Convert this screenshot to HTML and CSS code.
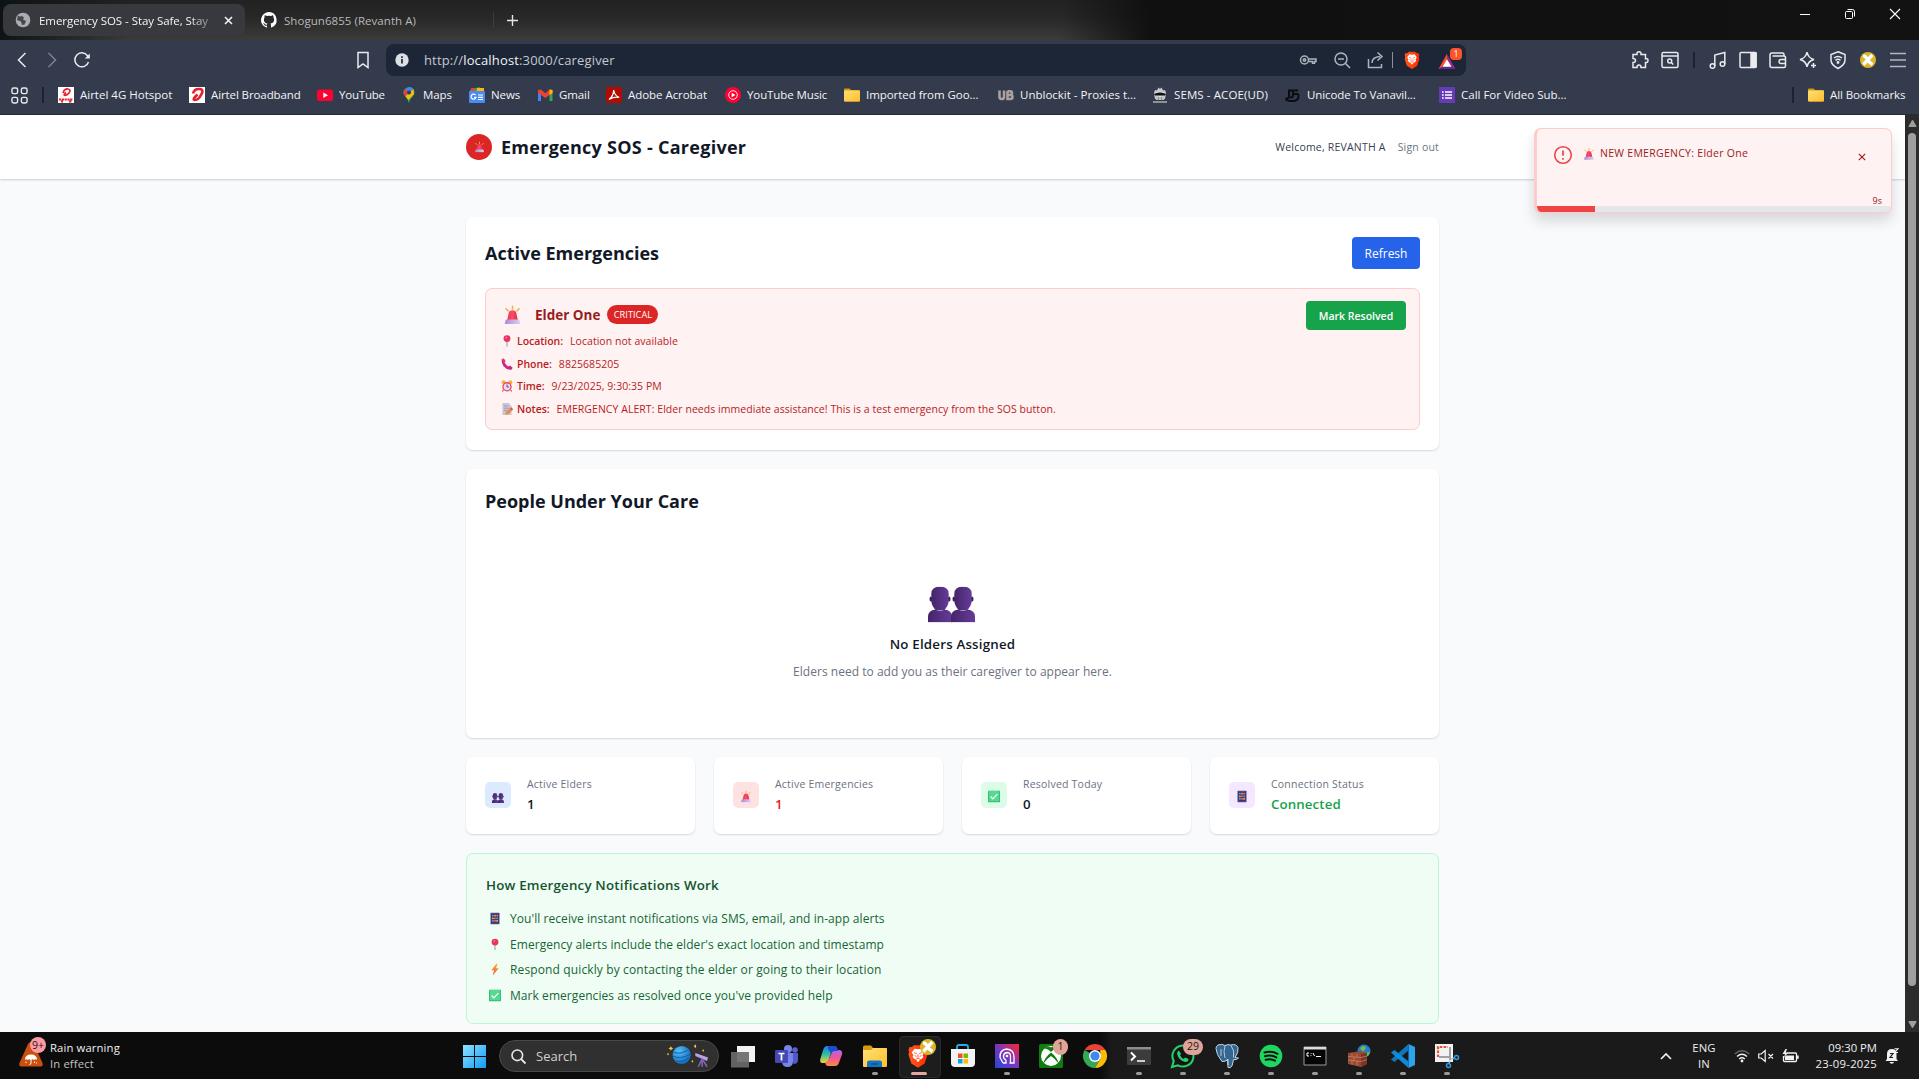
FILE: index.html
```html
<!DOCTYPE html>
<html lang="en">
<head>
<meta charset="utf-8">
<title>Emergency SOS - Stay Safe, Stay Connected</title>
<link rel="stylesheet" href="styles.css">
</head>
<body>
<svg class="defs" aria-hidden="true">
  <defs>
    <linearGradient id="g-siren" x1="0" x2="1"><stop offset="0" stop-color="#e8345c"/><stop offset=".5" stop-color="#ff4b62"/><stop offset="1" stop-color="#d92b4b"/></linearGradient>
    <linearGradient id="g-base" x1="0" x2="1"><stop offset="0" stop-color="#a98bd0"/><stop offset="1" stop-color="#ddd0f5"/></linearGradient>
    <linearGradient id="g-person" x1="0" x2="1"><stop offset="0" stop-color="#452568"/><stop offset="1" stop-color="#643c9a"/></linearGradient>
    <linearGradient id="g-bolt" x1="0" y1="0" x2="0" y2="1"><stop offset="0" stop-color="#ffb13d"/><stop offset="1" stop-color="#f0553a"/></linearGradient>
    <linearGradient id="g-win" x1="0" y1="0" x2="1" y2="1"><stop offset="0" stop-color="#8fe3ff"/><stop offset="1" stop-color="#0f9bf5"/></linearGradient>
    <linearGradient id="g-brave" x1="0" y1="0" x2="1" y2="0"><stop offset="0" stop-color="#ff5a1f"/><stop offset="1" stop-color="#ff2a00"/></linearGradient>
    <linearGradient id="g-folder" x1="0" y1="0" x2="1" y2="1"><stop offset="0" stop-color="#ffdf75"/><stop offset="1" stop-color="#fcbf2d"/></linearGradient>
    <linearGradient id="g-cop1" x1="0" y1="0" x2="0" y2="1"><stop offset="0" stop-color="#1b7fe8"/><stop offset=".5" stop-color="#2fc0a0"/><stop offset="1" stop-color="#ffd22e"/></linearGradient>
    <linearGradient id="g-cop2" x1="0" y1="0" x2="0" y2="1"><stop offset="0" stop-color="#b561e8"/><stop offset=".5" stop-color="#f0559a"/><stop offset="1" stop-color="#ff8a3c"/></linearGradient>
    <linearGradient id="g-app" x1="0" y1="1" x2="1" y2="0"><stop offset="0" stop-color="#2447d8"/><stop offset=".5" stop-color="#7a36c0"/><stop offset="1" stop-color="#ff2430"/></linearGradient>
    <radialGradient id="g-planet" cx=".35" cy=".3" r=".8"><stop offset="0" stop-color="#55c0fa"/><stop offset="1" stop-color="#0c5fb4"/></radialGradient>
    <symbol id="siren" viewBox="0 0 32 32">
      <path d="M8.500 9 5 5.500M16 6V1M23.500 9 27 5.500" stroke="#f3b04a" stroke-width="2.600" stroke-linecap="round"/>
      <path d="M7 25 9.500 13q1-5 6.500-5t6.500 5L25 25z" fill="url(#g-siren)"/>
      <path d="M4 26q0-2.500 2.500-2.500h19Q28 23.500 28 26l1 5H3z" fill="url(#g-base)"/>
    </symbol>
    <symbol id="person" viewBox="0 0 16 24">
      <ellipse cx="1.900" cy="8.300" rx=".9" ry="1.700" fill="#3b1c5c"/><ellipse cx="14.100" cy="8.300" rx=".9" ry="1.700" fill="#3b1c5c"/>
      <path d="M2.200 5Q2.200 0 8 0t5.800 5v5q-.5 3.500-3.300 6h-5q-2.800-2.500-3.300-6z" fill="url(#g-person)"/>
      <path d="M0 24v-4q0-4 5-4.700 3 2.200 6 0 5 .7 5 4.700v4z" fill="url(#g-person)"/>
    </symbol>
    <symbol id="people" viewBox="0 0 47 36" preserveAspectRatio="none">
      <use href="#person" x="0" y="0" width="24" height="36"/><use href="#person" x="23" y="0" width="24" height="36"/>
    </symbol>
    <symbol id="pin" viewBox="0 0 16 16"><path d="M8 8v7.500" stroke="#9d8fae" stroke-width="1.300"/><circle cx="8" cy="4.800" r="4.600" fill="#ea3562"/><circle cx="7" cy="3.400" r="1.200" fill="#ff85a0"/></symbol>
    <symbol id="phone" viewBox="0 0 16 16"><path d="M1 1.500 3.500.5 6 4 4.800 6q2 4 5 5.200L12 10l3.500 3-1.200 2.300Q8 16.500 3.300 11 .5 7 1 1.500z" fill="#c9267f"/><path d="M1 1.500 3.500.5 6 4 4.800 6z" fill="#ef3f6c"/></symbol>
    <symbol id="clock" viewBox="0 0 16 16"><path d="M3 13l-1 2.500M13 13l1 2.500" stroke="#e0435f" stroke-width="1.500"/><circle cx="3.500" cy="3" r="2.600" fill="#f5b03d"/><circle cx="12.500" cy="3" r="2.600" fill="#f5b03d"/><circle cx="8" cy="9" r="6.300" fill="#e8486a"/><circle cx="8" cy="9" r="4.500" fill="#e9dbf3"/><path d="M8 6v3.300h2.500" stroke="#4c3a66" fill="none" stroke-width="1.200"/></symbol>
    <symbol id="memo" viewBox="0 0 16 16"><path d="M2 0h8l4 4v12H2z" fill="#c8c2d6"/><path d="M4 4h5M4 7h7M4 10h4" stroke="#9a90b0" stroke-width="1"/><path d="M5.500 15.500 7 11.500l5-4.500 3 3-5 4.500z" fill="#f08a3a"/><path d="m12 7 1.500-1.500L16 8l-1 2z" fill="#e2405c"/></symbol>
    <symbol id="mobile" viewBox="0 0 16 16"><rect x="2" y="0" width="12" height="16" rx="1" fill="#54438a"/><rect x="3.500" y="2" width="9" height="11.500" fill="#2f2a5e"/><path d="M4 4.200h2.400M9.600 7.700H12M4 11.200h2.400" stroke="#3ea6f0" stroke-width="2.400"/><path d="M6.900 4.200h2.300M4 7.700h2.400M9.600 11.200H12" stroke="#f5a63c" stroke-width="2.400"/><path d="M9.600 4.200H12M6.900 7.700h2.300M6.900 11.200h2.300" stroke="#e87060" stroke-width="2.400"/></symbol>
    <symbol id="bolt" viewBox="0 0 16 16"><path d="M10 0 3 9h3.700L5 16l8-9.800H9.300L11.500 0z" fill="url(#g-bolt)"/></symbol>
    <symbol id="check" viewBox="0 0 16 16"><rect width="16" height="16" rx="1" fill="#2fb673"/><rect x="1" y=".5" width="14" height="14" fill="#55d88f"/><path d="m3.500 8 3 3.200 6-6.400" stroke="#fff" stroke-width="1.500" fill="none"/></symbol>
    <symbol id="folder" viewBox="0 0 16 16"><path d="M0 2.500Q0 1.500 1 1.500h4.500L7 3h8q1 0 1 1v9.500q0 1-1 1H1q-1 0-1-1z" fill="#d99a12"/><rect x="0" y="3.500" width="16" height="11" rx="1" fill="url(#g-folder)"/></symbol>
    <symbol id="brave" viewBox="0 0 24 28"><path d="M7 1h10l2.500 2.500L22 3l1.500 4-1 2 1 3-3.500 11-8 5-8-5L.5 12l1-3-1-2L2 3l2.500.5z" fill="url(#g-brave)"/><path d="m12 6 4-.8 3.500 4.500-2 3.500 1 2-3 3-1.500-.8v1.800L12 21.500 10 19.200v-1.800l-1.500.8-3-3 1-2-2-3.500L8 5.200z" fill="#fff"/><path d="m7.500 10 3 1M16.500 10l-3 1M12 12v4M10 16.500l2 1 2-1M8 13.500l2 1M16 13.500l-2 1" stroke="#fb4a1a" stroke-width="1.100" fill="none"/></symbol>
    <symbol id="avatar" viewBox="0 0 16 16"><circle cx="8" cy="8" r="8" fill="#dcb52c"/><path d="M3.200 3.500q3 1 4.300 4t5 5M12.300 3l-9 9.500" stroke="#fff" stroke-width="3.300" fill="none"/></symbol>
  </defs>
</svg>

<div class="tabstrip">
  <div class="tab tab-active">
    <svg class="i16" viewBox="0 0 16 16"><circle cx="8" cy="8" r="7.300" fill="#a9adb1"/><path d="M3 3.500Q5 5 7 4l2 1.500-1 2 3 1.500-1.500 3.500-2.500.5-1-3.500L2 8M10 2l3 3" fill="#46484c"/></svg>
    <span class="tab-title">Emergency SOS - Stay Safe, Stay</span>
    <svg class="tab-close" viewBox="0 0 9 9"><path d="m1 1 7 7M8 1 1 8" stroke="#f2f2f2" stroke-width="1.600"/></svg>
  </div>
  <div class="tab tab-idle">
    <svg class="i16" viewBox="0 0 16 16"><path fill="#fff" d="M8 0a8 8 0 0 0-2.500 15.600c.4.100.5-.2.500-.4v-1.500c-2.200.5-2.700-1-2.700-1-.4-.9-.9-1.200-.9-1.200-.7-.5.100-.5.100-.5.800.1 1.200.8 1.200.8.700 1.300 1.900.9 2.300.7.100-.5.300-.9.500-1.100-1.800-.2-3.600-.9-3.600-4 0-.9.300-1.600.8-2.100-.1-.200-.4-1 .1-2.100 0 0 .7-.2 2.200.8a7.500 7.500 0 0 1 4 0c1.500-1 2.200-.8 2.200-.8.400 1.100.2 1.900.1 2.100.5.600.8 1.300.8 2.100 0 3.100-1.900 3.700-3.700 3.900.3.300.6.800.6 1.500v2.200c0 .2.100.5.600.4A8 8 0 0 0 8 0z"/></svg>
    <span>Shogun6855 (Revanth A)</span>
  </div>
  <svg class="new-tab" viewBox="0 0 11 11"><path d="M5.500 0v11M0 5.500h11" stroke="#e6e6e6" stroke-width="1.400"/></svg>
  <div class="window-buttons">
    <svg viewBox="0 0 12 12"><path d="M1 6.500h10" stroke="#fff"/></svg>
    <svg viewBox="0 0 12 12" fill="none" stroke="#fff"><rect x="1.500" y="3.500" width="7" height="7" rx="1"/><path d="M3.500 1.500h5q2 0 2 2v5"/></svg>
    <svg viewBox="0 0 12 12"><path d="m1 1 10 10M11 1 1 11" stroke="#fff" stroke-width="1.100"/></svg>
  </div>
</div>

<div class="toolbar">
  <div class="cells">
    <svg class="ic" viewBox="0 0 18 18"><path d="M12.500 2 5.500 9l7 7" /></svg>
    <svg class="ic dim" viewBox="0 0 18 18"><path d="m5.500 2 7 7-7 7"/></svg>
    <svg class="ic" viewBox="0 0 18 18"><path d="M15.500 11a7 7 0 1 1-1-6.300L16 6.500"/><path d="M16.800 2.500v5h-5z" fill="#e9ebef" stroke="none"/></svg>
  </div>
  <svg class="ic bookmark" viewBox="0 0 18 18"><path d="M4 1.500h10v15l-5-3.500-5 3.500z"/></svg>
  <div class="urlbar">
    <svg class="i14" viewBox="0 0 14 14"><circle cx="7" cy="7" r="6.700" fill="#dcdfe5"/><path d="M7 6v4.500M7 3.300V5" stroke="#1d2636" stroke-width="1.700"/></svg>
    <span class="url">http://<em>localhost</em>:3000/caregiver</span>
    <svg class="ic c34" viewBox="0 0 18 18"><circle cx="5.500" cy="9" r="4"/><circle cx="5.500" cy="9" r="1.200"/><path d="M9.500 8H17v2.500h-1.500v1.800h-2v-1.800H9.300"/></svg>
    <svg class="ic c34" viewBox="0 0 18 18"><circle cx="8" cy="8" r="6"/><path d="m12.500 12.500 4.500 4.500M5 8h6"/></svg>
    <svg class="ic c32" viewBox="0 0 18 18"><path d="M1.500 8v8.500h13V13M5 12q0-6 8-6.500M10.500 1.500l4.500 4-4.500 4"/></svg>
    <i class="url-sep"></i>
    <svg class="shield" viewBox="0 0 24 28"><use href="#brave"/></svg>
    <span class="bat"><svg viewBox="0 0 18 16"><path d="M9 0 0 16h18z" fill="#9a2583"/><path d="M9 0 0 16l4-2.500 5-8z" fill="#ff4a1d"/><path d="m0 16 4-2.500h10l4 2.500z" fill="#5a2d91"/><path d="m9 5.500-4.800 8h9.600z" fill="#fff"/></svg><b>1</b></span>
  </div>
  <div class="cells cells-right">
    <svg class="ic" viewBox="0 0 18 18"><path d="M2 3.500h4Q5.500.8 8 .8t2 2.700h4.500v4.300q2.500-.5 2.500 1.700t-2.500 2v5H10q0-2.500-2-2.500T6 16.500H2v-5q2.500 0 2.500-2T2 7.500z"/></svg>
    <svg class="ic" viewBox="0 0 18 18"><rect x="1" y="1.500" width="16" height="15" rx="1.500"/><path d="M1 5h16"/><circle cx="8.700" cy="10" r="2"/><path d="m10.200 11.500 2 2"/></svg>
    <i class="bar-sep"></i>
    <svg class="ic" viewBox="0 0 18 18"><circle cx="3.500" cy="15" r="2.300"/><circle cx="13.500" cy="13" r="2.300"/><path d="M5.800 15V4L15.800 1.500V13"/></svg>
    <svg class="ic" viewBox="0 0 18 18"><rect x="1" y="1.500" width="16" height="15" rx="1"/><path d="M12 2h5v14h-5z" fill="#e9ebef"/></svg>
    <svg class="ic" viewBox="0 0 18 18"><path d="M15 5V3.500Q15 2 13.500 2H3Q1 2 1 4v10.500q0 2 2 2h12q1.500 0 1.500-1.500v-8Q16.500 5 15 5H3.500M16.500 8.500H12q-2 0-2 2t2 2h4.500"/></svg>
    <svg class="ic" viewBox="0 0 18 18"><path d="M8 1q1 6 7 7.500Q9 10 8 16 7 10 1 8.500 7 7 8 1zM14.500 12v5M12 14.500h5"/></svg>
    <svg class="ic" viewBox="0 0 18 18"><path d="M9 .8 16 3.500V9q0 5-7 8.500Q2 14 2 9V3.500zM5 7q4-3 8 0M6.500 9.300q2.500-2 5 0"/><circle cx="9" cy="11.500" r=".7"/></svg>
    <svg class="i16" viewBox="0 0 16 16"><use href="#avatar"/></svg>
    <svg class="ic grey" viewBox="0 0 18 18"><path d="M1 2.500h16M1 9h16M1 15.500h16"/></svg>
  </div>
</div>

<div class="bookmarks">
  <svg class="ic apps" viewBox="0 0 18 18"><rect x="1" y="1" width="6" height="6" rx="1.800"/><rect x="11" y="1" width="6" height="6" rx="1.800"/><rect x="1" y="11" width="6" height="6" rx="1.800"/><rect x="11" y="11" width="6" height="6" rx="1.800"/></svg>
  <i class="bar-sep"></i>
  <div class="bm bm-1"><svg viewBox="0 0 16 16"><path fill="#fff" d="M0 0h16v16H0z"/><path d="M5 6q1.500-4.500 5-4t1 4q-2 2.500-4 2.300T8 5.500" fill="none" stroke="#e8202a" stroke-width="1.700"/><path d="M1 12.500h14M3 14.500h2M11 14.500h3" stroke="#e8202a" stroke-width="2.200" stroke-dasharray="2.200 .6"/></svg><span>Airtel 4G Hotspot</span></div>
  <div class="bm bm-2"><svg viewBox="0 0 16 16"><path fill="#fff" d="M0 0h16v16H0z"/><path d="M4 6.500Q5.500 1.500 10.500 2T12 8q-2.500 5-6 5T8.500 7.500" fill="none" stroke="#e8202a" stroke-width="2.600"/></svg><span>Airtel Broadband</span></div>
  <div class="bm bm-3"><svg viewBox="0 0 16 16"><rect y="2.500" width="16" height="11.500" rx="2.500" fill="#ff0033"/><path d="m6.300 5.500 4.700 2.800-4.700 2.700z" fill="#fff"/></svg><span>YouTube</span></div>
  <div class="bm bm-4"><svg viewBox="0 0 16 16"><path d="M8 0a5.500 5.500 0 0 0-5.500 5.500C2.500 9 6.500 10.500 8 16z" fill="#1a9d55"/><path d="M8 0a5.500 5.500 0 0 1 5.500 5.500C13.500 9.500 9 10.500 8 16l-2-5z" fill="#34a853"/><path d="M3 3.200 8 0q3 0 4.300 2L5 9.500Q2 7 3 3.200z" fill="#4285f4"/><path d="M2.600 4.500 4 2l4 3.500L4.500 9.200Q2 7 2.600 4.500z" fill="#ea4335"/><path d="M4.500 9.200 12.500 2l.5 5-5.500 6z" fill="#fbbc04"/><circle cx="8" cy="5.500" r="2" fill="#2a3b5f"/></svg><span>Maps</span></div>
  <div class="bm bm-5"><svg viewBox="0 0 16 16"><path d="M1 3 10 0l5 4H1z" fill="#34a853"/><path d="M8 1h7v4H8z" fill="#fbbc04"/><path d="M2 1h4v3H2z" fill="#ea4335"/><rect y="4" width="16" height="12" rx="1" fill="#4a8af4"/><path d="M6.500 8a2.500 2.500 0 1 0 .5 2.300H5M9 8h5M9 10.300h5M9 12.500h5" stroke="#fff" fill="none" stroke-width="1.200"/></svg><span>News</span></div>
  <div class="bm bm-6"><svg viewBox="0 0 16 16"><path d="M1 3.500h3V14H1z" fill="#4285f4"/><path d="M12.500 3.500h3V14h-3z" fill="#34a853"/><path d="m1 3 3-.5 4.300 3.700L12.500 2.500l3 .5v3L8.300 11 1 6z" fill="#ea4335"/><path d="m12.500 2.500 3 .5v3l-3 2z" fill="#fbbc04"/></svg><span>Gmail</span></div>
  <div class="bm bm-7"><svg viewBox="0 0 16 16"><rect width="16" height="16" rx="2.500" fill="#b30b00"/><path d="M3 12.500Q7.500 9 7.700 3q1 6 5.500 7.300Q8 9.500 3 12.500z" fill="none" stroke="#fff" stroke-width="1.300"/></svg><span>Adobe Acrobat</span></div>
  <div class="bm bm-8"><svg viewBox="0 0 16 16"><circle cx="8" cy="8" r="8" fill="#ff0033"/><circle cx="8" cy="8" r="4.300" fill="none" stroke="#fff" stroke-width=".9"/><path d="m6.700 5.800 3.700 2.200-3.700 2.200z" fill="#fff"/></svg><span>YouTube Music</span></div>
  <div class="bm bm-9"><svg viewBox="0 0 16 16"><use href="#folder"/></svg><span>Imported from Goo...</span></div>
  <div class="bm bm-10"><svg viewBox="0 0 16 16" fill="none" stroke="#a9a0a0" stroke-width="2.600"><path d="M1.500 3.500V10q0 2 2.300 2T6 10V3.500M9.500 4v8h3q2 0 2-2t-2-2h-3M9.500 4.200H12q2 0 2 1.800t-2 2"/></svg><span>Unblockit - Proxies t...</span></div>
  <div class="bm bm-11"><svg viewBox="0 0 16 16"><path d="M2 6 3 3l2 .500L6.500.5 8 2 9.500.5 11 3.500l2-.5 1 3-1 6H3z" fill="#c9ccd0"/><path d="M2 7q6-3 12 0l-1 1.500H3z" fill="#111"/><path d="M1 14h14v2H1zM4 10h8v3H4z" fill="#8c8f94"/><path d="M5 10v3M8 9v4M11 10v3" stroke="#eee"/></svg><span>SEMS - ACOE(UD)</span></div>
  <div class="bm bm-12"><svg viewBox="0 0 16 16" fill="none" stroke="#0b0d12" stroke-width="2"><path d="M3 3.500h10M4 3.500v5q0 2 2 2t2-2v-5M8 7h4q1.500 0 1.500 2 0 5-6 5-5 0-6.500-1.500.5-2 3-1.500"/></svg><span>Unicode To Vanavil...</span></div>
  <div class="bm bm-13"><svg viewBox="0 0 16 16"><path fill="#673ab7" d="M0 0h16v16H0z"/><path d="M6 5h7M6 8h7M6 11h7M3 5h1.700M3 8h1.700M3 11h1.700" stroke="#fff" stroke-width="1.700"/></svg><span>Call For Video Sub...</span></div>
  <i class="bar-sep last-sep"></i>
  <div class="bm bm-all"><svg viewBox="0 0 16 16"><use href="#folder"/></svg><span>All Bookmarks</span></div>
</div>

<div class="viewport">
  <div class="page">
    <header class="header">
      <div class="container header-row">
        <span class="logo"><svg viewBox="0 0 32 32"><use href="#siren"/></svg></span>
        <h1>Emergency SOS - Caregiver</h1>
        <span class="welcome">Welcome, REVANTH A</span>
        <span class="signout">Sign out</span>
      </div>
    </header>
    <main class="container main">
      <section class="card emergencies">
        <div class="card-head"><h2>Active Emergencies</h2><button class="btn-refresh">Refresh</button></div>
        <div class="alert">
          <div class="alert-body">
            <div class="alert-head"><svg class="alert-siren" viewBox="0 0 32 32"><use href="#siren"/></svg><h3>Elder One</h3><span class="badge">CRITICAL</span></div>
            <div class="row"><svg viewBox="0 0 16 16"><use href="#pin"/></svg><b>Location:</b><span>Location not available</span></div>
            <div class="row"><svg viewBox="0 0 16 16"><use href="#phone"/></svg><b>Phone:</b><span>8825685205</span></div>
            <div class="row"><svg viewBox="0 0 16 16"><use href="#clock"/></svg><b>Time:</b><span>9/23/2025, 9:30:35 PM</span></div>
            <div class="row"><svg viewBox="0 0 16 16"><use href="#memo"/></svg><b>Notes:</b><span>EMERGENCY ALERT: Elder needs immediate assistance! This is a test emergency from the SOS button.</span></div>
          </div>
          <button class="btn-resolve">Mark Resolved</button>
        </div>
      </section>

      <section class="card people">
        <h2>People Under Your Care</h2>
        <div class="empty">
          <svg class="empty-icon" viewBox="0 0 47 36"><use href="#people"/></svg>
          <h3>No Elders Assigned</h3>
          <p>Elders need to add you as their caregiver to appear here.</p>
        </div>
      </section>

      <section class="stats">
        <div class="stat"><span class="stat-icon blue"><svg class="duo" viewBox="0 0 47 36" preserveAspectRatio="none"><use href="#people"/></svg></span><div><p>Active Elders</p><strong>1</strong></div></div>
        <div class="stat"><span class="stat-icon red"><svg viewBox="0 0 32 32"><use href="#siren"/></svg></span><div><p>Active Emergencies</p><strong class="v-red">1</strong></div></div>
        <div class="stat"><span class="stat-icon green"><svg viewBox="0 0 16 16"><use href="#check"/></svg></span><div><p>Resolved Today</p><strong>0</strong></div></div>
        <div class="stat"><span class="stat-icon purple"><svg viewBox="0 0 16 16"><use href="#mobile"/></svg></span><div><p>Connection Status</p><strong class="v-green">Connected</strong></div></div>
      </section>

      <section class="howto">
        <h3>How Emergency Notifications Work</h3>
        <ul>
          <li><svg viewBox="0 0 16 16"><use href="#mobile"/></svg>You'll receive instant notifications via SMS, email, and in-app alerts</li>
          <li><svg viewBox="0 0 16 16"><use href="#pin"/></svg>Emergency alerts include the elder's exact location and timestamp</li>
          <li class="wide"><svg viewBox="0 0 16 16"><use href="#bolt"/></svg>Respond quickly by contacting the elder or going to their location</li>
          <li><svg viewBox="0 0 16 16"><use href="#check"/></svg>Mark emergencies as resolved once you've provided help</li>
        </ul>
      </section>
    </main>
    <aside class="toast">
      <div class="toast-row">
        <svg class="toast-icon" viewBox="0 0 20 20"><circle cx="10" cy="10" r="8.300" fill="none" stroke="#ef4444" stroke-width="1.600"/><path d="M10 5.500v5.300M10 13v1.700" stroke="#ef4444" stroke-width="1.700"/></svg>
        <svg class="toast-siren" viewBox="0 0 32 32"><use href="#siren"/></svg>
        <span class="toast-text">NEW EMERGENCY: Elder One</span>
        <svg class="toast-close" viewBox="0 0 10 10"><path d="m1 1 8 8M9 1 1 9" stroke="#991b1b" stroke-width="1.400"/></svg>
      </div>
      <span class="toast-time">9s</span>
      <div class="progress"><i></i></div>
    </aside>
  </div>
  <div class="scrollbar">
    <svg viewBox="0 0 10 8"><path d="M5 0q.5 0 1 .8L9.500 7q.3 1-.7 1H1.200q-1 0-.7-1L4 .8Q4.500 0 5 0z" fill="#9f9f9f"/></svg>
    <i></i>
    <svg viewBox="0 0 10 8"><path d="M5 8q.5 0 1-.8L9.500 1q.3-1-.7-1H1.200Q.2 0 .5 1L4 7.200Q4.500 8 5 8z" fill="#9f9f9f"/></svg>
  </div>
</div>

<footer class="taskbar">
  <div class="weather">
    <span class="warn"><svg viewBox="0 0 24 26"><path d="M12 1q2 0 3 2l8.500 19q1 3.500-2 3.500h-19q-3 0-2-3.500L9 3q1-2 3-2z" fill="#c9500f"/><path d="M6 19q0-5.500 6-5.500t6 5.500q-1.500-1.300-3 0-1.500-1.300-3 0-1.500-1.300-3 0-1.500-1.300-3 0z" fill="#fff"/><path d="M12 18v4q0 1.500-1.500 1.500M7 20.500v1.500M15.500 20.500v1.500M17.500 21.500v1" stroke="#fff" fill="none"/></svg><b>9+</b></span>
    <div><span class="w1">Rain warning</span><span class="w2">In effect</span></div>
  </div>
  <svg class="start" viewBox="0 0 23 23" fill="url(#g-win)"><path d="M0 0h11v11H0zM12 0h11v11H12zM0 12h11v11H0zM12 12h11v11H12z"/></svg>
  <div class="search">
    <svg class="i15" viewBox="0 0 15 15"><circle cx="6.300" cy="6.300" r="5.300" fill="none" stroke="#e8e8e8" stroke-width="1.600"/><path d="m10.200 10.200 4.300 4.300" stroke="#e8e8e8" stroke-width="1.800"/></svg>
    <span>Search</span>
    <svg class="space" viewBox="0 0 44 24"><circle cx="15" cy="11" r="9.300" fill="url(#g-planet)"/><path d="M7 8q6 3 14-2M6 12q8 4 18-2M9 17q7 2 13-3" stroke="#0d5fa8" fill="none"/><path d="M4 2l1 1.500L6.500 4 5 5 4 6.500 3 5 1.500 4 3 3.500zM29 0l1 2-1 2-1.500-2zM37 5l1 1.500L37 8l-1-1.500zM26 16l1 1.500-1 1.500-1-1.500zM1 9l1 1-1 1.500L0 10z" fill="#f3c53b"/><path d="m29 9 13 4.500-1 3.500-12-5z" fill="#b9a2e0"/><path d="m36 15-4 8M36 15v8M36 15l5 8" stroke="#8563b5" stroke-width="1.600"/></svg>
  </div>
  <div class="apps-row">
    <span class="app"><svg viewBox="0 0 24 24"><path d="M6 2h18v16H6z" fill="#f3f3f3"/><path d="M0 8h18v15.500H0z" fill="#6a6a6a" opacity=".93"/></svg></span>
    <span class="app"><svg viewBox="0 0 24 24"><circle cx="20" cy="6" r="2.800" fill="#5b62c8"/><circle cx="13" cy="5" r="4" fill="#7b83eb"/><path d="M15 9h8v7q0 4-4.500 4z" fill="#5059c9"/><path d="M7 9h11v8q0 6-5.500 6T7 17z" fill="#7b83eb"/><rect y="6" width="13" height="13" rx="1.200" fill="#4349b5"/><path d="M3.500 9.500h6M6.500 9.500v7" stroke="#fff" stroke-width="1.700"/></svg></span>
    <span class="app"><svg viewBox="0 0 24 24"><path d="M8 2h7q2 0 2.500 2l.8 3h-4q-2 0-3 4l-1.500 5q-1 3-3.500 3H3.500Q.5 19 1.300 15l3-9.500Q5.500 2 8 2z" fill="url(#g-cop1)"/><path d="M16 22H9q-2 0-2.500-2l-.5-2q3.500 0 4.500-4l1.500-4q1-4 4-4h4.500q3.500.5 2.500 4.500l-3 8Q19 22 16 22z" fill="url(#g-cop2)"/><path d="M9 2h7q2 0 2.500 2.500l.7 2.500H16q-3 0-3.500 3L9 5z" fill="#1b4fc9"/></svg></span>
    <span class="app run"><svg viewBox="0 0 24 24"><path d="M0 3q0-1.500 1.500-1.500H8l2 2.500h14v8H0z" fill="#d99a12"/><path d="M0 6h8l2-2h12.500Q24 4 24 5.500V22q0 1-1 1H1q-1 0-1-1z" fill="url(#g-folder)"/><path d="M4 23v-4q0-2.500 2.500-2.500h10Q19 16.500 19 19v4z" fill="#1374c5"/><path d="M8 20h7" stroke="#0c538f" stroke-width="1.500"/></svg></span>
    <span class="app current"><svg viewBox="0 0 24 28"><use href="#brave"/></svg><svg class="who" viewBox="0 0 16 16"><use href="#avatar"/></svg></span>
    <span class="app"><svg viewBox="0 0 24 24"><path d="M6 6V3q0-2 2-2h7q2 0 2 2v3" stroke="#29aaf0" stroke-width="1.800" fill="none"/><path d="M0 5h24v14q0 4-4 4H4q-4 0-4-4z" fill="#f3f3f3"/><path d="M7 9.500h4.500V14H7z" fill="#f25022"/><path d="M12.500 9.500H17V14h-4.500z" fill="#7fba00"/><path d="M7 15h4.500v4.500H7z" fill="#00a4ef"/><path d="M12.500 15H17v4.500h-4.500z" fill="#ffb900"/></svg></span>
    <span class="app run"><svg viewBox="0 0 24 24"><path d="M0 0h24v24H0z" fill="url(#g-app)"/><path d="M8 19q-1-2-3-5.500Q4.500 6 11.500 5q7.500.5 7.500 8v6h-4.500M8 19h3v-3" fill="none" stroke="#fff" stroke-width="1.300"/><path d="M11 16q-3-1.500-2.500-4.500.8-3 4-3 3 .5 3 4V19" fill="none" stroke="#fff" stroke-width="1.300"/><circle cx="12" cy="12" r="1.300" fill="#fff"/></svg></span>
    <span class="app"><svg viewBox="0 0 24 24"><rect width="24" height="24" rx="1.500" fill="#107c10"/><circle cx="12" cy="12" r="10" fill="#fff"/><path d="M5 4.500q4 0 7 3.500 3-3.500 7-3.500-3-3-7-1.200Q8 1.500 5 4.500zM4 20q2-7 8-11.500Q18 13 20 20q-4-5.500-8-8-4 2.500-8 8z" fill="#107c10"/></svg><b class="count c1">1</b></span>
    <span class="app"><svg viewBox="0 0 24 24"><path d="M1.600 6A12 12 0 0 0 12 24l5.200-9L12 12z" fill="#34a853"/><path d="M22.400 6A12 12 0 0 1 12 24l5.200-9V6z" fill="#fbbc04"/><path d="M1.600 6A12 12 0 0 1 22.400 6H12z" fill="#ea4335"/><circle cx="12" cy="12" r="6" fill="#fff"/><circle cx="12" cy="12" r="4.600" fill="#4285f4"/></svg></span>
    <span class="app run"><svg viewBox="0 0 24 24"><rect y="3" width="24" height="18" rx="1" fill="#3a3c3e"/><path d="M0 3h24v2.500H0z" fill="#8b8d8f"/><path d="m4 8.500 4 4-4 4" stroke="#fff" stroke-width="2" fill="none"/><path d="M10 17h8" stroke="#fff" stroke-width="1.500"/></svg></span>
    <span class="app run"><svg viewBox="0 0 24 24"><path d="m1 23 1.700-6A10.500 10.500 0 1 1 7 21.300z" fill="#151515" stroke="#25d366" stroke-width="2"/><path d="M8 6.500 10 10l-1 1.500q1.500 2.500 3.700 3.500l1.500-1.500 3.300 1.500q0 3-3 3-7-1.500-8.500-8.500Q6.500 7 8 6.500z" fill="#25d366"/></svg><b class="count c29">29</b></span>
    <span class="app run"><svg viewBox="0 0 24 24"><path d="M3 1q4-1.500 7 .5 3-1.500 6-.5 5-1.500 7 2.500.8 5-3 10l3.500.5q-1.500 2-5 1.700L17 22q-1.500 2.500-4 1.500L12.500 15 11 17l-4 .5Q1 10 1 4.500 1 2 3 1z" fill="#336791" stroke="#c8d4df" stroke-width="1"/><path d="M10 2q-2 5 0 12M16 1.500q4 5 2.500 12M13 15v6M6 5v7" stroke="#c8d4df" fill="none" stroke-width=".9"/></svg></span>
    <span class="app run"><svg viewBox="0 0 24 24"><circle cx="12" cy="12" r="11.300" fill="#1ed760"/><path d="M5.500 8.500q7-2 13 1.300M6 12.200q6-1.700 11.300 1.200M6.700 15.700q5-1.300 9.300 1" stroke="#111" stroke-width="2" fill="none" stroke-linecap="round"/></svg></span>
    <span class="app run"><svg viewBox="0 0 24 24"><path d="M1 3h22v18H1z" fill="#050505" stroke="#9a9a9a"/><path d="M1 3h22v2.500H1z" fill="#d8dde2"/><path d="M6 9H4v3h2M8 9v.8M8 11.300v.8M10 9l1.500 3M13 12.500h5" stroke="#fff" fill="none"/></svg></span>
    <span class="app run"><svg viewBox="0 0 24 24"><circle cx="17" cy="7" r="6.500" fill="#2a7bd0"/><path d="M13 4q4-4 6 0l-3 4zM18 9l5-1q-1 4-4 5z" fill="#67c04a"/><path d="m1 9 13-2 6 2v11l-6 3-13-3z" fill="#9a4a33"/><path d="m14 10 6-1v11l-6 3z" fill="#7a3524"/><path d="M1 12.500l13 1 6-1.500M1 16l13 1.500 6-2M5 9.500v3M10 9.500v3.500M7 13v3.500M5 16.500v4M10 17v4.500" stroke="#c98a70" stroke-width=".7" fill="none"/></svg></span>
    <span class="app run"><svg viewBox="0 0 24 24"><path d="M17.500 0 24 3v18l-6.500 3z" fill="#2ba4f0"/><path d="M17.500 0v6.500L3.500 18 0 15.500z" fill="#0f78bd"/><path d="M17.500 24v-6.500L3.500 6 0 8.500z" fill="#0f8ad6"/></svg></span>
    <span class="app run"><svg viewBox="0 0 24 24"><path d="M0 0h18v18H0z" fill="#f2f2f2"/><path d="M3 13V3h10" stroke="#e2502a" stroke-width="2.200" fill="none" stroke-dasharray="2.600 1.300"/><path d="M4 13h12M15 3v13" stroke="#9da3a8" stroke-width="2"/><path d="M15 16.500l-1 3.500M16 15l4-1" stroke="#bbb" stroke-width="1.500"/><circle cx="13.500" cy="21.500" r="2" fill="none" stroke="#2a9be8" stroke-width="1.500"/><circle cx="21.500" cy="13.500" r="2" fill="none" stroke="#2a9be8" stroke-width="1.500"/></svg></span>
  </div>
  <div class="tray">
    <svg class="chev" viewBox="0 0 12 8"><path d="m1 7 5-5 5 5" stroke="#f2f2f2" stroke-width="1.600" fill="none"/></svg>
    <div class="lang"><span>ENG</span><span>IN</span></div>
    <svg class="wifi" viewBox="0 0 16 14"><path d="M.7 5q7.300-6.500 14.600 0" stroke="#666" stroke-width="1.300" fill="none"/><path d="M3 7.500q5-4.500 10 0M5.200 10q2.800-2.500 5.600 0" stroke="#f2f2f2" stroke-width="1.400" fill="none"/><circle cx="8" cy="12" r="1.400" fill="#f2f2f2"/></svg>
    <svg class="spk" viewBox="0 0 16 14"><path d="M.7 5h2.500l4-3.500v11l-4-3.500H.7zM10.500 5l4.500 4.500M15 5l-4.500 4.500" stroke="#f2f2f2" stroke-width="1.200" fill="none"/></svg>
    <svg class="batt" viewBox="0 0 17 14"><path d="M5 4h8.500q1 0 1 1v6.500q0 1-1 1h-11q-1 0-1-1V7" stroke="#f2f2f2" stroke-width="1.300" fill="none"/><path d="M3 6.500h9V11H3zM15 6.500h1.700v3.300H15zM3.500 0 .5 5H3L2 9l4-5.500H3.700L5 0z" fill="#f2f2f2"/></svg>
    <div class="time"><span>09:30 PM</span><span class="date">23-09-2025</span></div>
    <svg class="bell" viewBox="0 0 14 16"><path d="M2 11V6q0-5 5-5 4.500 0 4.500 5v5l1.500 2H.5zM4.500 14h4.500q-.5 1.700-2.200 1.700T4.500 14z" fill="#f2f2f2"/><path d="M5 5.500h3L5 9.500h3" stroke="#1b1b1b" stroke-width="1.200" fill="none"/><path d="M9.500.8h3.500L9.500 4.500H13" stroke="#f2f2f2" stroke-width="1.100" fill="none"/></svg>
  </div>
</footer>
</body>
</html>
```

FILE: styles.css
```css
* { box-sizing: border-box; }
html, body { margin: 0; height: 100%; }
body {
  width: 1919px; height: 1079px; overflow: hidden;
  display: flex; flex-direction: column;
  font-family: "Open Sans", "Noto Sans", sans-serif;
  font-size: 12px; color: #111827; background: #0c0c0c;
}
h1, h2, h3, p, ul { margin: 0; padding: 0; }
h1, h2 { font-weight: 700; }
h3 { font-weight: 600; }
ul { list-style: none; }
button { border: 0; padding: 0; font: inherit; color: #fff; }
svg { display: block; flex: none; overflow: visible; }
span { white-space: nowrap; }
.defs { position: absolute; width: 0; height: 0; }
.i16 { width: 16px; height: 16px; }
.i15 { width: 15px; height: 15px; }
.i14 { width: 14px; height: 14px; }

/* Tab strip */
.tabstrip {
  height: 40px; flex: none; display: flex; align-items: flex-start; padding: 4px 0 0 3px;
  color: #b9b9b9; font-size: 11.500px;
  background:
    linear-gradient(90deg, rgba(12,18,19,.95) 0, rgba(16,20,20,0) 130px, rgba(16,16,16,0) 1060px, #0f100f 1150px, #121212 100%),
    linear-gradient(#222 0, #282828 45%, #3b3b39 100%);
}
.tab { height: 32px; display: flex; align-items: center; }
.tab-active { width: 242px; padding: 0 12px; border-radius: 8px; background: #38393e; color: #f4f4f4; }
.tab-title {
  width: 171px; margin: 0 14px 0 8px; overflow: hidden; letter-spacing: -.05px;
  -webkit-mask-image: linear-gradient(90deg, #000 150px, rgba(0,0,0,.35) 171px);
}
.tab-close { width: 9px; height: 9px; }
.tab-idle { width: 249px; padding-left: 16px; gap: 7px; border-right: 1px solid #3c3d40; height: 16px; margin-top: 8px; letter-spacing: .05px; }
.new-tab { width: 11px; height: 11px; margin: 11px 0 0 13px; }
.window-buttons { display: flex; margin: 4px 18px 0 auto; gap: 33px; }
.window-buttons svg { width: 12px; height: 12px; }

/* Toolbar */
.toolbar { height: 40px; flex: none; display: flex; align-items: center; background: #333b4d; padding: 0 6px 0 7px; }
.cells { display: flex; align-items: center; }
.ic { width: 18px; height: 18px; margin: 0 6px; fill: none; stroke: #e9ebef; stroke-width: 1.500; }
.dim { stroke: #7c8391; }
.grey { stroke: #b3b7be; stroke-width: 1.700; }
.bookmark { margin-left: 257px; margin-right: 14px; }
.urlbar { width: 1080px; height: 32px; border-radius: 8px; background: #1d2636; display: flex; align-items: center; padding: 0 2px 0 9px; }
.url { margin: 0 auto 0 15px; font-size: 13px; letter-spacing: .15px; color: #c3c8d1; }
.url em { font-style: normal; color: #f0f2f5; }
.c34 { margin: 0 9px 0 7px; width: 18px; stroke: #aeb3bc; }
.c32 { margin: 0 7px; stroke: #aeb3bc; }
.url-sep { width: 1px; height: 16px; background: #8a909b; margin: 0 1px 0 0; }
.shield { width: 16px; height: 18px; margin: 0 10px; }
.bat { position: relative; width: 34px; padding-left: 8px; }
.bat svg { width: 18px; height: 15px; margin-top: 2px; }
.bat b { position: absolute; left: 20px; top: -4px; width: 12px; height: 12px; border-radius: 4px; background: #fb542b; color: #fff; font: 9px/12px "Open Sans", sans-serif; text-align: center; }
.cells-right { margin-left: auto; }
.cells-right .i16 { margin: 0 7px; }
.bar-sep { width: 2px; height: 16px; background: #1b2230; margin: 0 8px; flex: none; }

/* Bookmarks bar */
.bookmarks { height: 35px; flex: none; display: flex; align-items: center; background: #333b4d; border-bottom: 1px solid #272c38; padding: 0 14px 4px 5px; color: #f3f4f6; font-size: 11.500px; }
.apps { width: 17px; height: 17px; }
.bookmarks .bar-sep { margin: 0 14px 0 8px; }
.bm { display: flex; align-items: center; gap: 6px; flex: none; letter-spacing: -.1px; }
.bm svg { width: 16px; height: 16px; }
.bm span { margin-top: -2px; }
.bm-1 { width: 131px; letter-spacing: 0; } .bm-2 { width: 128px; } .bm-3 { width: 84px; letter-spacing: -.2px; } .bm-4 { width: 68px; }
.bm-5 { width: 68px; } .bm-6 { width: 69px; } .bm-7 { width: 119px; letter-spacing: -.05px; } .bm-8 { width: 119px; }
.bm-9 { width: 154px; letter-spacing: -.05px; } .bm-10 { width: 154px; letter-spacing: 0; } .bm-11 { width: 133px; letter-spacing: .1px; } .bm-12 { width: 154px; } .bm-13 { width: 130px; letter-spacing: 0; }
.bookmarks .last-sep { margin-left: auto; }
.bm-all { width: 97px; }

/* Page viewport */
.viewport { height: 917px; flex: none; display: flex; }
.page { width: 1905px; position: relative; background: #f9fafb; }
.container { width: 973px; margin: 0 auto; }
.header { background: #fff; height: 64px; box-shadow: 0 1px 2px rgba(0,0,0,.18); }
.header-row { height: 64px; display: flex; align-items: center; }
.logo { width: 26px; height: 26px; border-radius: 50%; background: #dc2626; display: flex; align-items: center; justify-content: center; margin-right: 9px; }
.logo svg { width: 11px; height: 12px; }
.header h1 { font-size: 18px; line-height: 26px; letter-spacing: .27px; }
.welcome { margin-left: auto; font-size: 10.500px; letter-spacing: .2px; color: #374151; }
.signout { margin-left: 12px; font-size: 10.500px; letter-spacing: .2px; color: #6b7280; }
.main { padding-top: 38px; display: flex; flex-direction: column; gap: 19px; }
.card, .stat { background: #fff; border-radius: 7px; box-shadow: 0 1px 2px rgba(0,0,0,.14); }
.card { padding: 20px 19px 0; }
.card h2 { font-size: 18px; line-height: 26px; letter-spacing: 0; }
.emergencies { height: 233px; }
.card-head { display: flex; justify-content: space-between; align-items: center; height: 32px; margin-bottom: 19px; }
.btn-refresh { width: 68px; height: 32px; border-radius: 4px; background: #2563eb; font-size: 12px; }
.alert { height: 142px; border: 1px solid #fecaca; border-radius: 7px; background: #fef2f2; padding: 12px 13px 0 15px; display: flex; justify-content: space-between; align-items: flex-start; color: #b91c1c; font-size: 10.500px; letter-spacing: .05px; }
.alert-head { display: flex; align-items: center; height: 27px; margin-bottom: 2px; }
.alert-siren { width: 19px; height: 20px; margin: 0 13px 0 2px; }
.alert h3 { font-size: 13.500px; font-weight: 700; letter-spacing: 0; color: #991b1b; margin-right: 7px; padding-top: 1px; }
.badge { width: 51px; height: 19px; border-radius: 10px; background: #dc2626; color: #fff; font-size: 9.200px; line-height: 19px; text-align: center; letter-spacing: .05px; margin-top: -1px; }
.row { display: flex; align-items: center; height: 22.600px; }
.row svg { width: 12px; height: 12px; margin-right: 4px; }
.row b { font-weight: 600; margin-right: 7px; letter-spacing: -.05px; }
.btn-resolve { width: 100px; height: 29px; border-radius: 4px; background: #16a34a; font-size: 10.500px; font-weight: 600; }
.people { height: 269px; padding-top: 19px; }
.empty { display: flex; flex-direction: column; align-items: center; padding-top: 72px; }
.empty-icon { width: 47px; height: 37px; margin-left: -3px; }
.empty h3 { font-size: 13.300px; line-height: 20px; margin-top: 11px; letter-spacing: .2px; }
.empty p { font-size: 12px; line-height: 18px; margin-top: 9px; letter-spacing: .03px; color: #6b7280; }
.stats { display: grid; grid-template-columns: repeat(4, 229px); gap: 19px; }
.stat { height: 77px; padding: 0 19px 2px; display: flex; align-items: center; gap: 16px; }
.stat-icon { width: 26px; height: 26px; border-radius: 5px; display: flex; align-items: center; justify-content: center; padding-top: 3px; }
.stat-icon svg { width: 12px; height: 13px; }
.stat-icon .duo { width: 12px; height: 10px; margin-top: 3px; }
.blue { background: #dbeafe; } .red { background: #fee2e2; } .green { background: #dcfce7; } .purple { background: #f3e8ff; }
.stat p { font-size: 10.500px; line-height: 18px; font-weight: 500; letter-spacing: .22px; color: #6b7280; }
.stat strong { display: block; font-size: 13.300px; line-height: 20px; padding-top: 1px; font-weight: 600; }
.stat .v-red { color: #dc2626; }
.stat .v-green { color: #16a34a; letter-spacing: .1px; }
.howto { height: 171px; border: 1px solid #bbf7d0; border-radius: 7px; background: #f0fdf4; padding: 21px 19px 0 19px; color: #166534; }
.howto h3 { font-size: 13.300px; line-height: 20px; letter-spacing: .2px; color: #14532d; margin-bottom: 11px; }
.howto li { display: flex; align-items: center; height: 25.600px; font-size: 12px; letter-spacing: .06px; }
.howto .wide { letter-spacing: .13px; }
.howto li svg { width: 12px; height: 13px; margin: 0 9px 0 3px; }

/* Toast sits over the page */
.toast { position: absolute; left: 1534px; top: 13px; width: 358px; height: 85px; border: 1px solid #fecaca; border-left-width: 3px; border-radius: 7px; background: #fef2f2; box-shadow: 0 8px 14px rgba(0,0,0,.14); overflow: hidden; color: #991b1b; font-size: 10.500px; display: flex; flex-direction: column; }
.toast-row { display: flex; align-items: center; padding: 12px 24px 0 16px; height: 38px; }
.toast-icon { width: 20px; height: 20px; margin-top: 2px; }
.toast-siren { width: 12px; height: 12px; margin: 0 5px 0 10px; }
.toast-text { font-weight: 500; letter-spacing: .28px; margin-top: -2px; }
.toast-close { width: 8px; height: 8px; margin: 6px 1px 0 auto; }
.toast-time { margin: auto 9px 0 auto; font-size: 9px; line-height: 11px; }
.progress { height: 6px; background: #e5e7eb; }
.progress i { display: block; width: 58px; height: 6px; background: #ef4444; }
.scrollbar { width: 14px; background: #2c2c2c; display: flex; flex-direction: column; align-items: center; justify-content: space-between; padding: 5px 0 4px; }
.scrollbar svg { width: 9px; height: 7px; }
.scrollbar i { width: 8px; height: 853px; margin-bottom: 29px; border-radius: 4px; background: #9f9f9f; }

/* Taskbar */
.taskbar { height: 47px; flex: none; display: flex; align-items: center; background: linear-gradient(90deg, #0c0c0c 1100px, #1a1a1a 1112px); color: #f0f0f0; font-size: 11.300px; padding-right: 20px; }
.weather { width: 463px; padding-left: 19px; display: flex; gap: 7px; line-height: 16px; letter-spacing: .12px; }
.weather div { display: flex; flex-direction: column; margin-top: 1px; }
.w2 { color: #c2c2c2; }
.warn { position: relative; }
.warn svg { width: 24px; height: 26px; margin-top: 2px; }
.warn b { position: absolute; left: 11px; top: -2px; width: 16px; height: 16px; border-radius: 50%; background: #ff99a4; color: #1a1a1a; font: 10.500px/16px "Open Sans", sans-serif; text-align: center; }
.start { width: 23px; height: 23px; margin-top: 2px; }
.search { width: 220px; height: 32px; margin: 1px 2px 0 13px; border-radius: 16px; background: #303030; border: 1px solid #484848; display: flex; align-items: center; padding: 0 8px 0 11px; font-size: 13px; color: #cfcfcf; }
.search span { margin: -1px auto 0 10px; }
.space { width: 43px; height: 24px; }
.apps-row { display: flex; }
.app { position: relative; width: 44px; height: 47px; padding: 12px 0 0 10px; }
.app svg { width: 24px; height: 24px; }
.run::after { content: ""; position: absolute; left: 19px; bottom: 4px; width: 6px; height: 3px; border-radius: 2px; background: #9a9a9a; }
.current::before { content: ""; position: absolute; left: 2px; top: 4px; width: 40px; height: 40px; border-radius: 4px; background: #1d1d1d; border: 1px solid #2b2b2b; }
.current svg { position: relative; left: 1px; width: 20px; }
.current .who { position: absolute; left: 23px; top: 7px; width: 16px; height: 16px; }
.current::after { content: ""; position: absolute; left: 14px; bottom: 4px; width: 16px; height: 3px; border-radius: 2px; background: #e3a79c; }
.count { position: absolute; top: 7px; height: 16px; border-radius: 8px; background: #e0a498; color: #1a1a1a; font: 10.500px/15px "Open Sans", sans-serif; text-align: center; }
.c1 { left: 24px; width: 15px; }
.c29 { left: 22px; width: 20px; }
.tray { margin-left: auto; display: flex; align-items: center; line-height: 16px; }
.tray div { display: flex; flex-direction: column; }
.chev { width: 12px; height: 8px; }
.lang { width: 24px; margin: 0 18px 0 20px; align-items: center; letter-spacing: .1px; }
.wifi { width: 16px; height: 14px; }
.spk { width: 16px; height: 14px; margin: 0 8px; }
.batt { width: 17px; height: 14px; }
.time { width: 78px; align-items: flex-end; margin-right: 8px; }
.date { letter-spacing: .25px; }
.bell { width: 14px; height: 16px; }
```
